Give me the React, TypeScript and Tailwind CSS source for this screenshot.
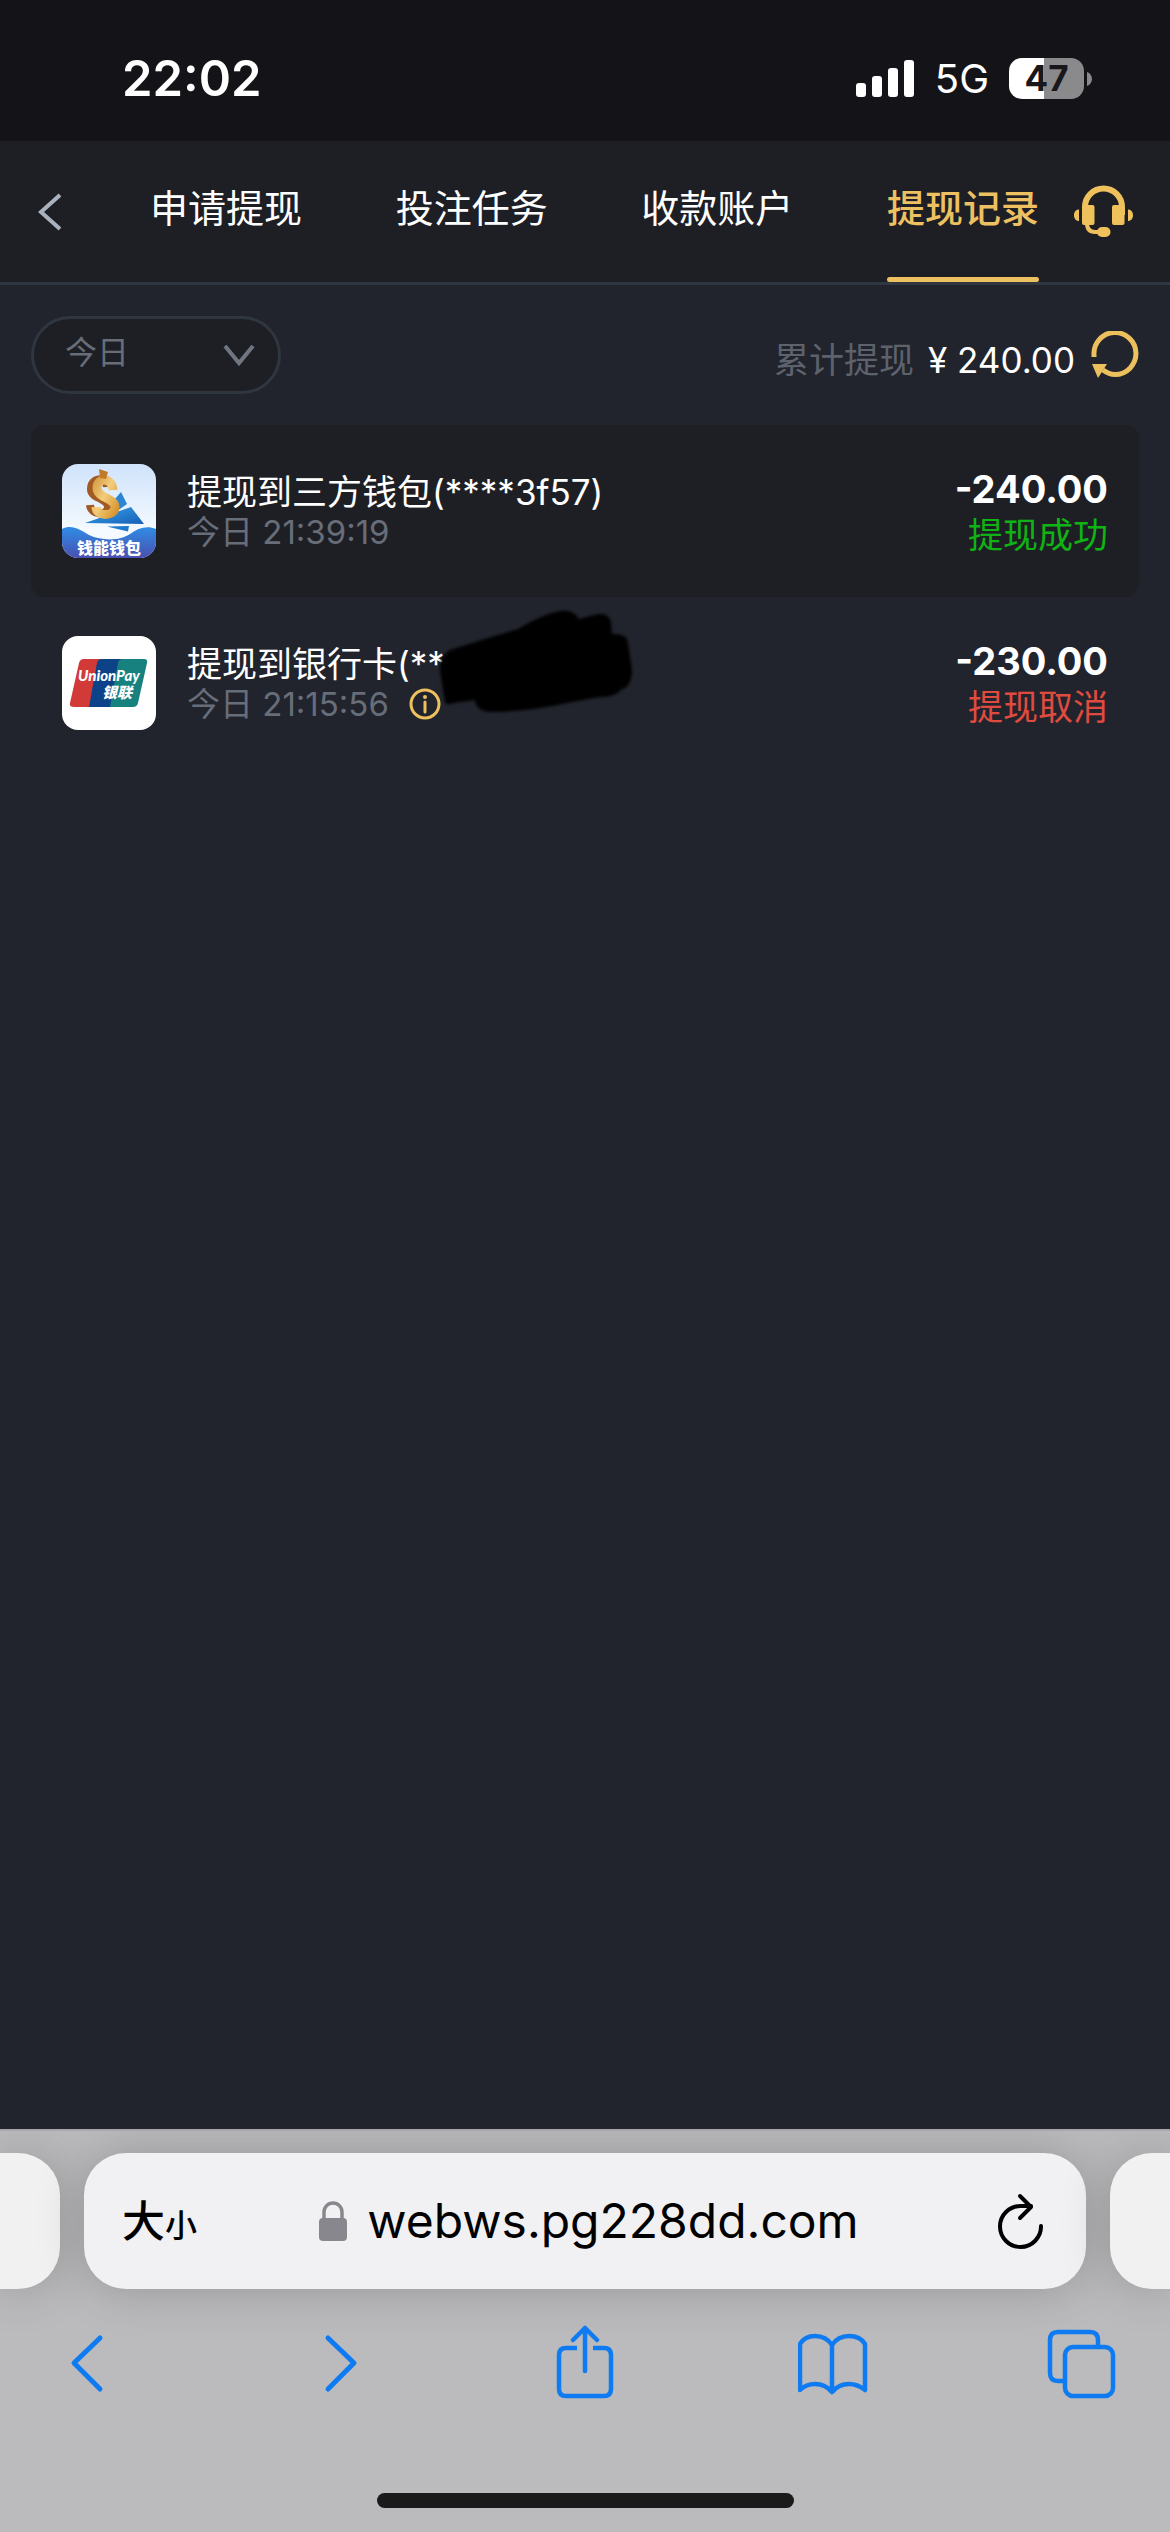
import React, { useState } from 'react';

interface WithdrawRecord {
  id: number;
  title: string;
  time: string;
  amount: string;
  status: 'success' | 'cancelled';
  channel: 'wallet' | 'unionpay';
  masked?: boolean;
}

const TABS = ['申请提现', '投注任务', '收款账户', '提现记录'];

const RECORDS: WithdrawRecord[] = [
  { id: 1, title: '提现到三方钱包(****3f57)', time: '今日 21:39:19', amount: '-240.00', status: 'success', channel: 'wallet' },
  { id: 2, title: '提现到银行卡(***', time: '今日 21:15:56', amount: '-230.00', status: 'cancelled', channel: 'unionpay', masked: true },
];

const StatusBar: React.FC = () => (
  <div className="flex h-[141px] items-center justify-between bg-[#141418] pt-4 pr-[78px] pl-[122px] text-white">
    <span className="text-[49px] leading-none font-semibold">22:02</span>
    <div className="flex items-center gap-5">
      <svg width="60" height="38" viewBox="0 0 60 38" fill="white">
        <rect x="1" y="23" width="10" height="14" rx="3" />
        <rect x="17" y="16" width="10" height="21" rx="3" />
        <rect x="33" y="8" width="10" height="29" rx="3" />
        <rect x="49" y="0" width="10" height="37" rx="3" />
      </svg>
      <span className="text-[40px] leading-none">5G</span>
      <div className="flex items-center gap-[3px]">
        <div className="flex h-[41px] w-[75px] items-center justify-center rounded-[13px] bg-[linear-gradient(90deg,#ffffff_47%,#8a8a8d_47%)] text-[35px] leading-none font-bold text-[#18181c]">
          47
        </div>
        <svg width="5" height="14" viewBox="0 0 5 14" fill="#8a8a8d">
          <path d="M0 0C3 1 5 4 5 7S3 13 0 14Z" />
        </svg>
      </div>
    </div>
  </div>
);

const HeadsetIcon: React.FC = () => (
  <svg width="59" height="54" viewBox="0 0 59 54" fill="#eec15c">
    <path d="M11 30V22a18.500 18.500 0 0 1 37 0V30" fill="none" stroke="#eec15c" strokeWidth="6" />
    <rect x="8" y="20" width="12.500" height="20" rx="2" />
    <rect x="38" y="20" width="12.500" height="20" rx="2" />
    <path d="M5 24.500V36C2 36 0 33.500 0 30.200S2 24.500 5 24.500ZM54 24.500V36C57 36 59 33.500 59 30.200S57 24.500 54 24.500Z" />
    <path d="M13 38C13 44 16 47 21 47H27" fill="none" stroke="#eec15c" strokeWidth="4" />
    <rect x="23" y="42" width="13.500" height="10" rx="5" />
  </svg>
);

const WalletLogo: React.FC = () => (
  <svg width="94" height="94" viewBox="0 0 94 94" className="block rounded-[16px]">
    <defs>
      <linearGradient id="sky" x1="0" y1="0" x2="0" y2="1">
        <stop offset="0" stopColor="#cfe3fb" />
        <stop offset="0.700" stopColor="#f4faff" />
      </linearGradient>
      <linearGradient id="sea" x1="0" y1="0" x2="0" y2="1">
        <stop offset="0" stopColor="#2f8de6" />
        <stop offset="1" stopColor="#4a4fb0" />
      </linearGradient>
      <linearGradient id="gold" x1="0" y1="0" x2="1" y2="1">
        <stop offset="0" stopColor="#d9a04a" />
        <stop offset="0.450" stopColor="#f3cd7c" />
        <stop offset="1" stopColor="#d8952f" />
      </linearGradient>
      <linearGradient id="plane" x1="0" y1="0" x2="1" y2="1">
        <stop offset="0" stopColor="#3ba2e8" />
        <stop offset="1" stopColor="#1560b8" />
      </linearGradient>
    </defs>
    <rect width="94" height="94" fill="url(#sky)" />
    <path d="M40 50 59 28 65 40 48 52Z" fill="#2a86d3" />
    <path d="M23 59 69 43 82 60Z" fill="url(#plane)" />
    <path d="M45 62.500 67 62 66 67.500Z" fill="#2179cd" />
    <path d="M45 23C44 12 29 13 29 25C29 35 46 34 46 43C46 52 29 52 28 41" fill="none" stroke="#a05a22" strokeWidth="8" />
    <path d="M51 26C50 13 35 13 35 24C35 34 53 34 53 43C53 53 34 53 34 43" fill="none" stroke="url(#gold)" strokeWidth="9" />
    <path d="M37 5 46 8 44 15 38 14Z" fill="#c17a2a" />
    <path d="M0 65C10 60 18 66 27 71C40 77 58 77 68 70C76 64 85 61 94 65V94H0Z" fill="url(#sea)" />
    <text x="47" y="90" textAnchor="middle" fontSize="16" fontWeight="900" fill="white">钱能钱包</text>
  </svg>
);

const UnionPayLogo: React.FC = () => (
  <svg width="94" height="94" viewBox="0 0 94 94" className="block rounded-[16px]">
    <rect width="94" height="94" fill="white" />
    <path d="M22 23H42L32 71H12Q7 71 8 67L17 27Q18 23 22 23Z" fill="#d23a38" />
    <path d="M40 23H61L51 71H27L35 27Q36 23 40 23Z" fill="#0c4288" />
    <path d="M61 23H82Q86 23 85 27L76 67Q75 71 71 71H48L56 27Q57 23 61 23Z" fill="#17817f" />
    <text x="16" y="45" fontFamily="Lato, sans-serif" fontSize="15" fontWeight="900" fontStyle="italic" fill="white">UnionPay</text>
    <text x="40" y="62" fontSize="15" fontWeight="900" fontStyle="italic" fill="white">银联</text>
  </svg>
);

const RecordRow: React.FC<{ record: WithdrawRecord }> = ({ record }) => (
  <li className="relative flex h-[172px] items-center rounded-[14px] px-[31px] odd:bg-[#1e1f24]">
    {record.channel === 'wallet' ? <WalletLogo /> : <UnionPayLogo />}
    <div className="ml-[31px] flex-1 pt-px">
      <p className="text-[35px] leading-10 text-white">{record.title}</p>
      <p className="flex items-center gap-5 text-[33px] leading-10 text-[#676d79]">
        {record.time}
        {record.status === 'cancelled' && (
          <button aria-label="详情">
            <svg width="32" height="32" viewBox="0 0 32 32" fill="none" stroke="#edc05e" strokeWidth="3">
              <circle cx="16" cy="16" r="14" />
              <path d="M16 14V24" strokeLinecap="round" />
              <circle cx="16" cy="9" r="2" fill="#edc05e" stroke="none" />
            </svg>
          </button>
        )}
      </p>
    </div>
    <div className="pt-px text-right">
      <p className="text-[38px] leading-[46px] font-bold text-white">{record.amount}</p>
      {record.status === 'success' ? (
        <p className="text-[35px] leading-[46px] text-[#0fb414]">提现成功</p>
      ) : (
        <p className="text-[35px] leading-[46px] text-[#e04b40]">提现取消</p>
      )}
    </div>
    {/* hand-drawn scribble over the card number */}
    {record.masked && (
      <svg className="absolute top-[12px] left-[407px]" width="198" height="108" viewBox="0 0 198 108">
        <defs>
          <filter id="brush">
            <feGaussianBlur stdDeviation="1.5" />
          </filter>
        </defs>
        <path
          d="M7 93 2 62Q1 47 12 41L50 29 80 20Q105 5 122 2Q136 0 141 10L160 5Q172 4 173 14L174 25Q189 24 190 34L194 60Q194 78 184 80Q176 89 162 88L134 93Q90 103 52 103Q38 102 37 91L16 94Q8 97 7 93Z"
          fill="black"
          filter="url(#brush)"
        />
      </svg>
    )}
  </li>
);

const BrowserBar: React.FC = () => (
  <footer className="overflow-hidden border-t-2 border-[#aaa6aa] bg-[#bbbbbd] pt-[22px]">
    <div className="flex gap-6">
      <div className="h-[136px] w-[60px] rounded-r-[42px] bg-[#f1f1f2] shadow-[0_0_50px_rgba(0,0,0,0.2)]" />
      <div className="flex h-[136px] flex-1 items-center rounded-[42px] bg-[#f1f1f3] pr-[30px] pl-[38px] text-black shadow-[0_0_50px_rgba(0,0,0,0.2)]">
        <div className="flex-1">
          <button className="flex items-baseline font-medium" aria-label="大小">
            <span className="text-[43px] leading-none">大</span>
            <span className="text-[32px] leading-none">小</span>
          </button>
        </div>
        <a href="#" className="flex items-center gap-5 text-[48px] leading-none">
          <svg width="28" height="40" viewBox="0 0 28 40">
            <path d="M5 18V11a9 9 0 0 1 18 0V18" fill="none" stroke="#88878d" strokeWidth="3.500" />
            <rect x="0" y="17" width="28" height="23" rx="4" fill="#88878d" />
          </svg>
          webws.pg228dd.com
        </a>
        <div className="flex flex-1 justify-end">
          <button aria-label="刷新" className="px-3">
            <svg width="46" height="56" viewBox="0 0 46 56" fill="none" stroke="black" strokeWidth="4" strokeLinecap="round" strokeLinejoin="round">
              <path d="M43 33A20.500 20.500 0 1 1 23 13H33" />
              <path d="M22 3 33 14 22 25" />
            </svg>
          </button>
        </div>
      </div>
      <div className="h-[136px] w-[60px] rounded-l-[42px] bg-[#f1f1f2] shadow-[0_0_50px_rgba(0,0,0,0.2)]" />
    </div>

    <nav className="mt-[36px] flex justify-between px-[51px]">
      <button aria-label="后退">
        <svg width="72" height="76" viewBox="0 0 72 76" fill="none" stroke="#0f7bf2" strokeWidth="5" strokeLinecap="round" strokeLinejoin="round">
          <path d="M49 13 23 38 49 64" />
        </svg>
      </button>
      <button aria-label="前进">
        <svg width="72" height="76" viewBox="0 0 72 76" fill="none" stroke="#0f7bf2" strokeWidth="5" strokeLinecap="round" strokeLinejoin="round">
          <path d="M28 13 54 38 28 64" />
        </svg>
      </button>
      <button aria-label="分享">
        <svg width="72" height="76" viewBox="0 0 72 76" fill="none" stroke="#0f7bf2" strokeWidth="4.500" strokeLinejoin="round">
          <path d="M28 23H17Q10 23 10 30V64Q10 71 17 71H55Q62 71 62 64V30Q62 23 55 23H44" />
          <path d="M36 46V3M24 15 36 3 48 15" strokeLinecap="round" />
        </svg>
      </button>
      <button aria-label="书签">
        <svg width="72" height="76" viewBox="0 0 72 76" fill="none" stroke="#0f7bf2" strokeWidth="4.500" strokeLinejoin="round">
          <path d="M34 20C30 14 24 11 17 11S5 14 2 19V65C6 61 11 59 17 59S29 61 34 67C39 61 45 59 51 59S62 61 67 65V19C64 14 58 11 51 11S38 14 34 20ZM34 20V67" />
        </svg>
      </button>
      <button aria-label="标签页">
        <svg width="72" height="76" viewBox="0 0 72 76" fill="none" stroke="#0f7bf2" strokeWidth="4.500">
          <path d="M51 22V15Q51 7 43 7H11Q3 7 3 15V48Q3 56 11 56H18" />
          <rect x="18" y="22" width="48" height="49" rx="8" />
        </svg>
      </button>
    </nav>

    <div className="mx-auto mt-[92px] mb-6 h-[15px] w-[417px] rounded-full bg-[#1a1a1a]" />
  </footer>
);

const App: React.FC = () => {
  const [activeTab, setActiveTab] = useState('提现记录');

  return (
    <div className="flex min-h-screen flex-col bg-[#21242c] font-[Inter,'Noto_Sans_CJK_SC',sans-serif]">
      <StatusBar />

      <header className="flex h-[144px] items-center border-b-[3px] border-[#303740] bg-[#1e1f24] pr-[37px] pl-[38px]">
        <button aria-label="返回">
          <svg width="24" height="38" viewBox="0 0 24 38" fill="none" stroke="#a9b2bf" strokeWidth="4">
            <path d="M22 2 3 19 22 36" />
          </svg>
        </button>
        <nav className="mr-[35px] ml-[88px] flex flex-1 justify-between self-stretch">
          {TABS.map(tab => (
            <button
              key={tab}
              onClick={() => setActiveTab(tab)}
              className={`relative pb-[6px] text-[38px] ${tab === activeTab ? 'font-medium text-[#edc062]' : 'text-white'}`}
            >
              {tab}
              {tab === activeTab && <span className="absolute inset-x-0 bottom-0 h-[5px] rounded-full bg-[#edc062]" />}
            </button>
          ))}
        </nav>
        <button aria-label="客服">
          <HeadsetIcon />
        </button>
      </header>

      <main className="flex-1 px-[31px] pt-[31px]">
        <div className="mb-[31px] flex items-center justify-between">
          <div className="relative">
            <select
              aria-label="日期"
              className="h-[78px] w-[250px] appearance-none rounded-full border-[3px] border-[#2f3640] bg-[#1e1f24] pb-1 pl-[31px] text-[32px] text-[#676d79] outline-none"
            >
              <option>今日</option>
            </select>
            <svg className="pointer-events-none absolute top-[29px] right-[26px]" width="32" height="22" viewBox="0 0 32 22" fill="none" stroke="#6f7682" strokeWidth="4">
              <path d="M2 1 16 18 30 1" />
            </svg>
          </div>
          <div className="flex items-center">
            <p className="flex gap-[14px] pt-[10px] text-[35px] leading-10">
              <span className="text-[#5d626d]">累计提现</span>
              <span className="text-white">¥ 240.00</span>
            </p>
            <button aria-label="刷新金额" className="ml-4">
              <svg width="48" height="48" viewBox="0 0 48 48" fill="none">
                <path d="M3 26V24A21 21 0 1 1 24 43.500Q18 43.500 12 39" stroke="#edc05e" strokeWidth="5" />
                <path d="M1 33H16L7 47Z" fill="#edc05e" />
              </svg>
            </button>
          </div>
        </div>

        <ul>
          {RECORDS.map(record => (
            <RecordRow key={record.id} record={record} />
          ))}
        </ul>
      </main>

      <BrowserBar />
    </div>
  );
};

export default App;
